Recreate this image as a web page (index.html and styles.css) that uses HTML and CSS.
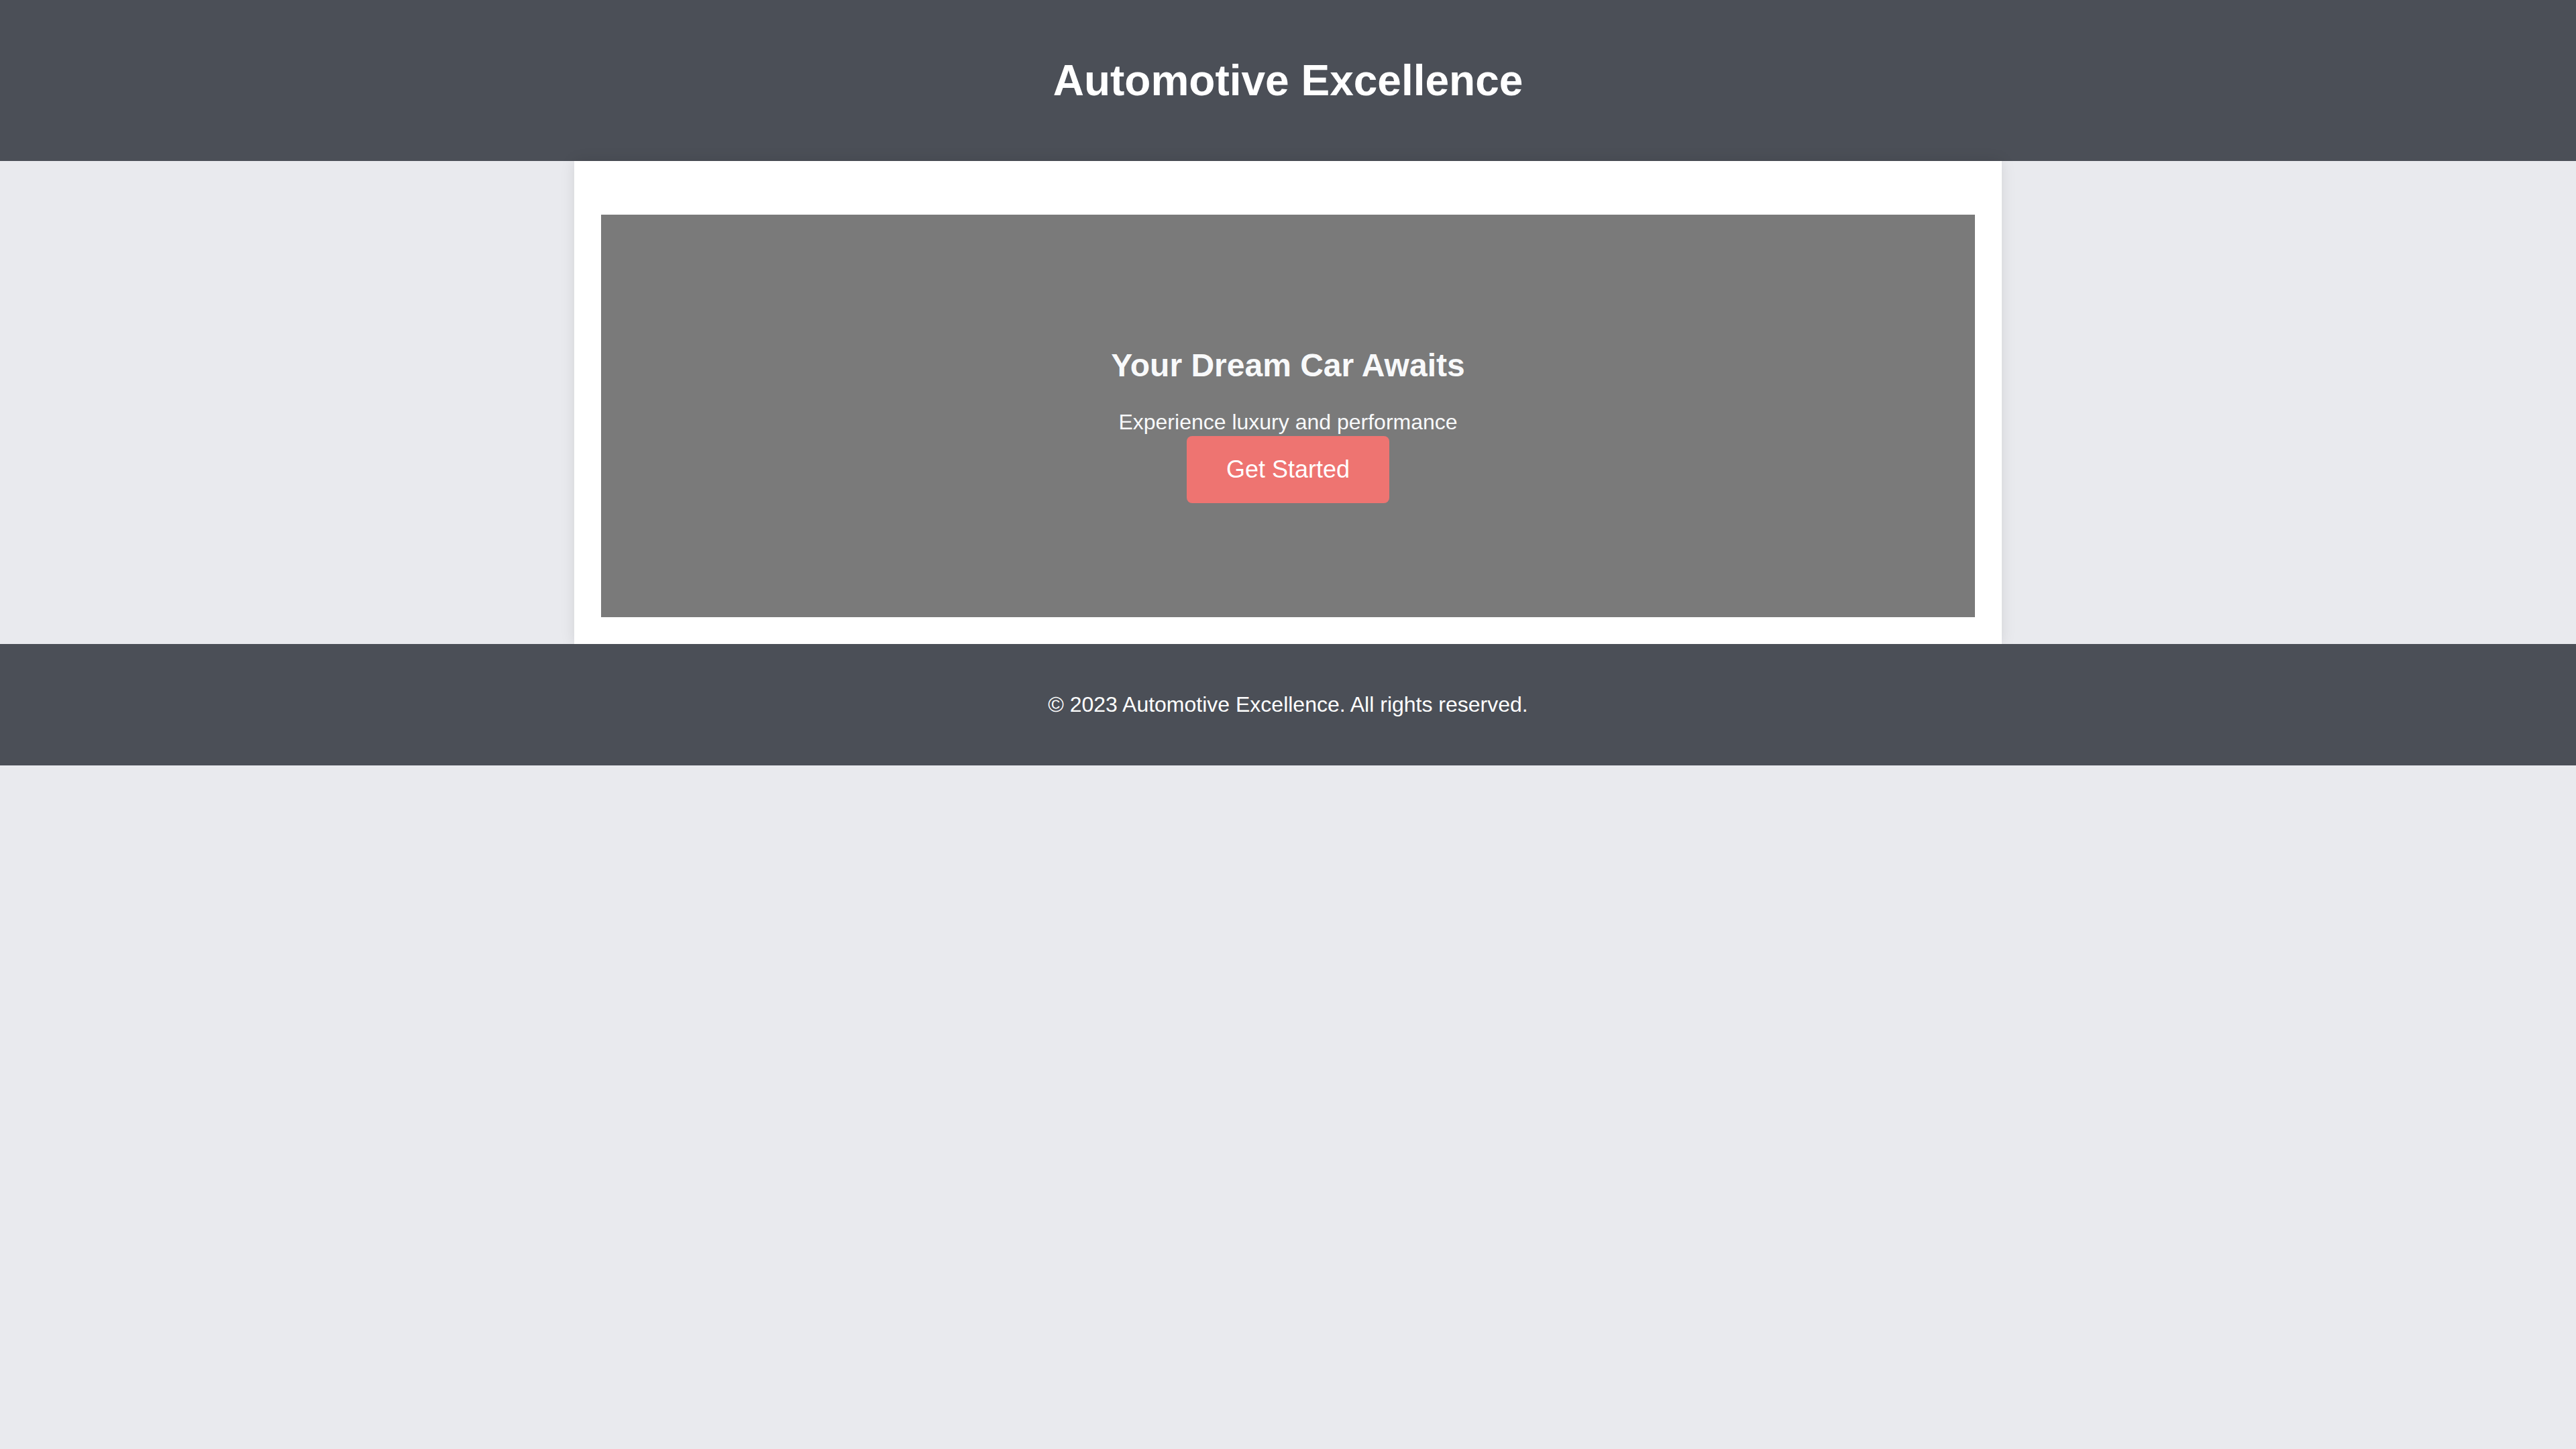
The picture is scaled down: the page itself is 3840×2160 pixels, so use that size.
FILE: index.html
```html
<!DOCTYPE html>
<html lang="en">
<head>
<meta charset="utf-8">
<title>Automotive Excellence</title>
<link rel="stylesheet" href="styles.css">
</head>
<body>
<header class="site-header">
  <h1 class="site-title">Automotive Excellence</h1>
</header>
<main class="container">
  <section class="hero">
    <h2 class="hero-title">Your Dream Car Awaits</h2>
    <p class="hero-text">Experience luxury and performance</p>
    <a class="btn" href="#">Get Started</a>
  </section>
</main>
<footer class="site-footer">
  <p class="footer-text">&copy; 2023 Automotive Excellence. All rights reserved.</p>
</footer>
</body>
</html>
```
FILE: styles.css
```css
html, body {
  margin: 0;
  padding: 0;
}
body {
  background: #e9eaee;
  font-family: "Liberation Sans", Arial, sans-serif;
  font-size: 32px;
  color: #333;
}
.site-header {
  background: #4b4f57;
  color: #ffffff;
  text-align: center;
  padding: 40px;
}
.site-title {
  font-size: 64px;
  font-weight: bold;
  line-height: 74px;
  margin: 43px 0;
}
.container {
  width: 2128px;
  box-sizing: border-box;
  margin: 0 auto;
  padding: 40px;
  background: #ffffff;
  box-shadow: 0 0 20px rgba(0, 0, 0, 0.1);
}
.hero {
  margin-top: 40px;
  height: 600px;
  background: #7a7a7a;
  color: #f8f9fa;
  display: flex;
  flex-direction: column;
  align-items: center;
  justify-content: center;
  text-align: center;
}
.hero-title {
  font-size: 48px;
  font-weight: bold;
  line-height: 1.15;
  margin: 27px 0 39px;
}
.hero-text {
  font-size: 32px;
  line-height: 1.15;
  margin: 0 0 3px;
}
.btn {
  display: inline-block;
  background: #ee7471;
  color: #ffffff;
  text-decoration: none;
  font-size: 36px;
  line-height: 42px;
  padding: 29px 59px;
  border-radius: 8px;
}
.site-footer {
  background: #4b4f57;
  color: #ffffff;
  text-align: center;
  padding: 40px;
}
.footer-text {
  font-size: 32px;
  line-height: 37px;
  margin: 32px 0;
}
```
